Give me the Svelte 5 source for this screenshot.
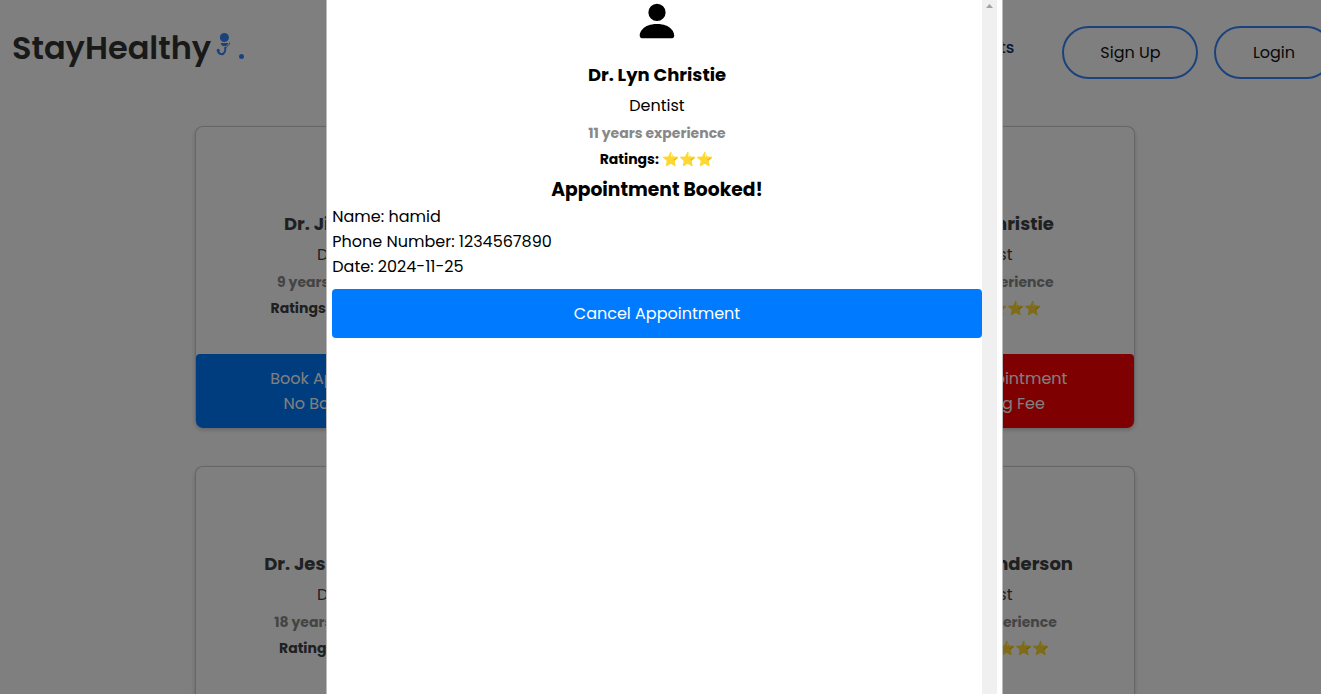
<script>
  const doctors = [
    { name: 'Dr. Jiao Yang', years: 9, stars: 5 },
    { name: 'Dr. Denis Raj', years: 24, stars: 5 },
    { name: 'Dr. Lyn Christie', years: 11, stars: 3, booked: true },
    { name: 'Dr. Jessica Manly', years: 18, stars: 4 },
    { name: 'Dr. Ediz Tekok', years: 14, stars: 4 },
    { name: 'Dr. Laura Anderson', years: 20, stars: 4 }
  ];
  const selected = doctors[2];
  const details = ['Name: hamid', 'Phone Number: 1234567890', 'Date: 2024-11-25'];
</script>

{#snippet profile(d)}
  <div class="name">{d.name}</div>
  <div class="role">Dentist</div>
  <div class="years">{d.years} years experience</div>
  <div class="rating">Ratings: {'⭐'.repeat(d.stars)}</div>
{/snippet}

<div class="page">
  <nav>
    <div class="logo">
      <span class="brand">StayHealthy</span>
      <svg width="16" height="26" viewBox="0 0 16 26">
        <circle cx="8.400" cy="5.500" r="4.500" />
        <path d="M4.600 11h7.600c-.4 2-1.800 3.300-3.800 3.300S5 13 4.600 11z" />
        <path d="M13.600 10.500c0 3-3.200 3.800-4.400 6.200" fill="none" stroke="#3685fb" stroke-width="1" />
        <path d="M9 15c.8 1.800.4 3.600-.3 5-1.800 3.500-6.200 2.500-6.800-1.500" fill="none" stroke="#3685fb" stroke-width="2" />
        <circle cx="2.200" cy="18.300" r="1.500" />
      </svg>
      <i></i>
    </div>
    <div class="links">
      <span class="link">Appointments</span>
      <button class="pill signup">Sign Up</button>
      <button class="pill login">Login</button>
    </div>
  </nav>

  <main>
    {#each doctors as d}
      <article>
        <div class="info">{@render profile(d)}</div>
        <button class="book" class:cancel={d.booked}>
          <span>{d.booked ? 'Cancel Appointment' : 'Book Appointment'}</span>
          <span>No Booking Fee</span>
        </button>
      </article>
    {/each}
  </main>
</div>

<div class="overlay">
  <section class="modal">
    <div class="content">
      <svg class="person" width="46" height="46" viewBox="0 0 16 16">
        <path d="M3 14s-1 0-1-1 1-4 6-4 6 3 6 4-1 1-1 1zm5-6a3 3 0 1 0 0-6 3 3 0 0 0 0 6" />
      </svg>
      {@render profile(selected)}
      <h3>Appointment Booked!</h3>
      {#each details as line}<p>{line}</p>{/each}
      <button class="action">Cancel Appointment</button>
    </div>
    <div class="track">
      <svg width="15" height="15" viewBox="0 0 15 15"><path d="M4 8L7.500 4L11 8z" fill="#a3a3a3" /></svg>
    </div>
  </section>
</div>

<style>
  :global(body) { overflow: hidden; }
  .page, .overlay {
    font-family: Poppins, Inter, sans-serif;
    font-size: 16px;
    box-sizing: border-box;
  }
  .page { width: 1321px; height: 694px; overflow: hidden; background: #fff; color: #3d4145; }
  button { font: inherit; border: 0; padding: 0; box-sizing: border-box; flex: none; }
  nav { display: flex; justify-content: space-between; height: 126px; padding-left: 12px; box-sizing: border-box; }
  .logo { display: flex; align-items: flex-start; padding-top: 24px; }
  .brand { width: 199px; font-size: 32px; font-weight: 600; line-height: 48px; color: #333; white-space: nowrap; }
  .logo svg { margin: 8px 0 0 5px; fill: #3685fb; }
  .logo i { width: 5.600px; height: 5.600px; border-radius: 50%; background: #3685fb; margin: 29.500px 0 0 6.600px; }
  .links { display: flex; align-items: flex-start; padding-top: 26px; margin-right: -12.400px; }
  .link { line-height: 43px; margin-right: 48px; color: #15315c; font-weight: 500; }
  .pill { height: 53px; border: 2px solid #3685fb; border-radius: 27px; background: transparent; color: #111; }
  .signup { width: 136px; margin-right: 16px; padding-left: 0.600px; }
  .login { width: 119.400px; padding-left: 0.600px; }
  .pill { margin-left: -0.200px; }

  main { display: grid; grid-template-columns: repeat(3, 300px); gap: 38px 20px; width: 940px; margin: 0 0 0 194.800px; }
  article {
    display: flex; flex-direction: column; height: 302px; box-sizing: border-box;
    border: 1px solid #ccc; border-bottom: 0; border-radius: 8px; box-shadow: 0 2px 4px rgba(0, 0, 0, 0.2);
  }
  .info { flex: 1; padding-top: 81px; }
  .name { text-align: center; font-size: 18px; font-weight: 700; line-height: 32px; white-space: nowrap; }
  .role { text-align: center; line-height: 30px; }
  .years { text-align: center; font-size: 14px; font-weight: 700; line-height: 25px; color: #888; }
  .rating { text-align: center; font-size: 14px; font-weight: 700; line-height: 27px; height: 27px; padding-right: 1.400px; }
  .book {
    display: flex; flex-direction: column; align-items: center; justify-content: center; height: 74px; padding-right: 1.200px;
    line-height: 25px; background: #007bff; color: #fff; border-radius: 4px 4px 7px 7px;
  }
  .cancel { background: #f00; }

  .overlay { position: fixed; inset: 0; background: rgba(0, 0, 0, 0.5); padding-left: 326px; }
  .modal {
    display: flex; width: 677px; height: 694px; box-sizing: border-box; padding: 0 5px;
    border: solid #bbb; border-width: 0 1px; background: #fff; color: #000;
  }
  .content { display: flex; flex-direction: column; width: 650px; }
  .person { display: block; align-self: center; margin: -2px 0 15px; flex: none; }
  h3 { margin: 3px 0 0; text-align: center; font-size: 18.720px; font-weight: 700; line-height: 28px; }
  p { margin: 0; line-height: 25px; padding-left: 0.300px; }
  .action { height: 49px; margin-top: 10px; background: #007bff; color: #fff; border-radius: 4px; }
  .track { width: 15px; background: #f0f0f0; }
  .track svg { display: block; }
</style>
